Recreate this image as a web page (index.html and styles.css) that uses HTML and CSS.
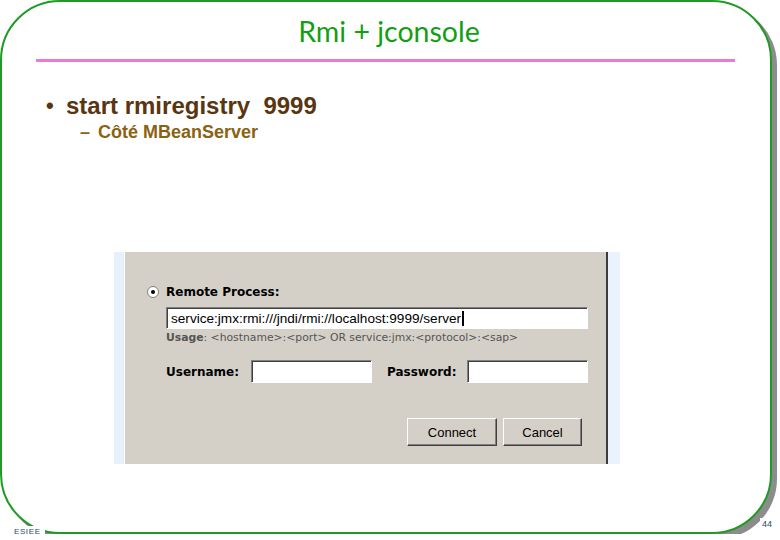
FILE: index.html
```html
<!DOCTYPE html>
<html lang="fr">
<head>
<meta charset="utf-8">
<title>Rmi + jconsole</title>
<link rel="stylesheet" href="styles.css">
</head>
<body>
<div class="slide">
  <h1 class="title">Rmi + jconsole</h1>
  <div class="rule"></div>
  <ul class="points">
    <li class="point"><span class="bullet">•</span><span>start rmiregistry&nbsp; 9999</span></li>
    <li class="subpoint"><span class="dash">–</span><span>Côté MBeanServer</span></li>
  </ul>
  <div class="shot">
    <div class="strip-left"></div>
    <div class="dialog">
      <div class="radio-row"><span class="radio"></span><span class="label">Remote Process:</span></div>
      <div class="field url">service:jmx:rmi:///jndi/rmi://localhost:9999/server<span class="caret"></span></div>
      <div class="usage"><b>Usage</b>: &lt;hostname&gt;:&lt;port&gt; OR service:jmx:&lt;protocol&gt;:&lt;sap&gt;</div>
      <div class="creds">
        <span class="label user-label">Username:</span><span class="field small"></span>
        <span class="label pass-label">Password:</span><span class="field small"></span>
      </div>
      <div class="buttons">
        <span class="btn connect">Connect</span>
        <span class="btn cancel">Cancel</span>
      </div>
    </div>
    <div class="divider"></div>
    <div class="strip-right"></div>
  </div>
  <span class="foot-left">ESIEE</span>
  <span class="foot-right">44</span>
</div>
</body>
</html>
```

FILE: styles.css
```css
html, body {
  margin: 0;
  padding: 0;
  background: #ffffff;
}

.slide {
  position: relative;
  box-sizing: border-box;
  width: 772px;
  height: 534px;
  border: 2px solid #1f9a24;
  border-radius: 60px;
  box-shadow: 5px 5px 0 #8c8c8c;
  background: #ffffff;
  font-family: "Liberation Sans", Arial, sans-serif;
}

.title {
  margin: 0;
  padding-top: 11px;
  height: 36px;
  line-height: 36px;
  text-align: center;
  font-family: "Lato", "Open Sans", sans-serif;
  font-weight: normal;
  font-size: 28.5px;
  color: #12a012;
  padding-left: 6px;
}

.rule {
  margin: 10px 0 0 34px;
  width: 699px;
  height: 3px;
  background: #e77bd6;
}

.points {
  list-style: none;
  margin: 31px 0 0 0;
  padding: 0;
}

.point {
  display: flex;
  height: 26px;
  line-height: 26px;
  font-weight: bold;
  font-size: 24px;
  color: #5a3510;
  padding-left: 44px;
}

.point .bullet {
  width: 20px;
  font-size: 22px;
}

.subpoint {
  display: flex;
  margin-top: 3px;
  height: 20px;
  line-height: 20px;
  font-weight: bold;
  font-size: 18px;
  color: #8b6212;
  padding-left: 78px;
}

.subpoint .dash {
  width: 18px;
}

.shot {
  display: flex;
  margin: 110px 0 0 112px;
  width: 506px;
  height: 212px;
  font-family: "DejaVu Sans", Verdana, sans-serif;
  font-size: 11px;
  color: #000;
}

.strip-left {
  width: 10px;
  background: #e6f1fc;
  border-right: 1px solid #ffffff;
}

.dialog {
  width: 481px;
  background: #d4d0c8;
}

.divider {
  width: 2px;
  background: #3c3c3c;
}

.strip-right {
  flex: 1;
  background: #eaf3fd;
}

.radio-row {
  display: flex;
  align-items: center;
  margin-top: 34px;
  padding-left: 22px;
  height: 12px;
  gap: 7px;
}

.radio {
  box-sizing: border-box;
  width: 12px;
  height: 12px;
  border-radius: 50%;
  background: #ffffff;
  border: 1px solid #808080;
  display: flex;
  align-items: center;
  justify-content: center;
}

.radio::after {
  content: "";
  width: 4px;
  height: 4px;
  border-radius: 50%;
  background: #000;
}

.label {
  font-weight: bold;
  font-size: 12px;
}

.field {
  box-sizing: border-box;
  background: #ffffff;
  border-top: 1px solid #808080;
  border-left: 1px solid #808080;
  border-right: 1px solid #ffffff;
  border-bottom: 1px solid #ffffff;
  box-shadow: inset 1px 1px 0 #404040;
}

.url {
  display: flex;
  align-items: center;
  margin: 9px 0 0 41px;
  width: 422px;
  height: 22px;
  padding-left: 4px;
  font-family: "Liberation Sans", Arial, sans-serif;
  font-size: 13.6px;
  white-space: nowrap;
}

.caret {
  display: inline-block;
  width: 2px;
  height: 15px;
  margin-left: 1px;
  background: #000;
}

.usage {
  margin: 2px 0 0 41px;
  height: 14px;
  line-height: 14px;
  font-size: 10.8px;
  color: #555555;
  white-space: nowrap;
}

.creds {
  display: flex;
  align-items: center;
  margin: 15px 0 0 41px;
  height: 23px;
}

.creds .user-label {
  width: 85px;
}

.creds .pass-label {
  width: 80px;
  margin-left: 15px;
}

.creds .field {
  width: 121px;
  height: 23px;
}

.buttons {
  display: flex;
  justify-content: flex-end;
  gap: 6px;
  margin-top: 35px;
  padding-right: 24px;
}

.btn {
  box-sizing: border-box;
  display: flex;
  align-items: center;
  justify-content: center;
  height: 28px;
  font-family: "Liberation Sans", Arial, sans-serif;
  font-size: 13px;
  background: #d4d0c8;
  border-top: 1px solid #ffffff;
  border-left: 1px solid #ffffff;
  border-right: 1px solid #404040;
  border-bottom: 1px solid #404040;
  box-shadow: inset -1px -1px 0 #808080;
}

.connect {
  width: 90px;
}

.cancel {
  width: 79px;
}

.foot-left {
  position: absolute;
  left: 8px;
  top: 524px;
  padding: 0 4px;
  background: #ffffff;
  font-size: 8px;
  line-height: 12px;
  color: #2b4b6b;
  letter-spacing: 0.6px;
}

.foot-right {
  position: absolute;
  left: 758px;
  top: 516px;
  padding: 0 2px;
  background: #ffffff;
  font-size: 9px;
  line-height: 12px;
  color: #2b4b6b;
}
```
